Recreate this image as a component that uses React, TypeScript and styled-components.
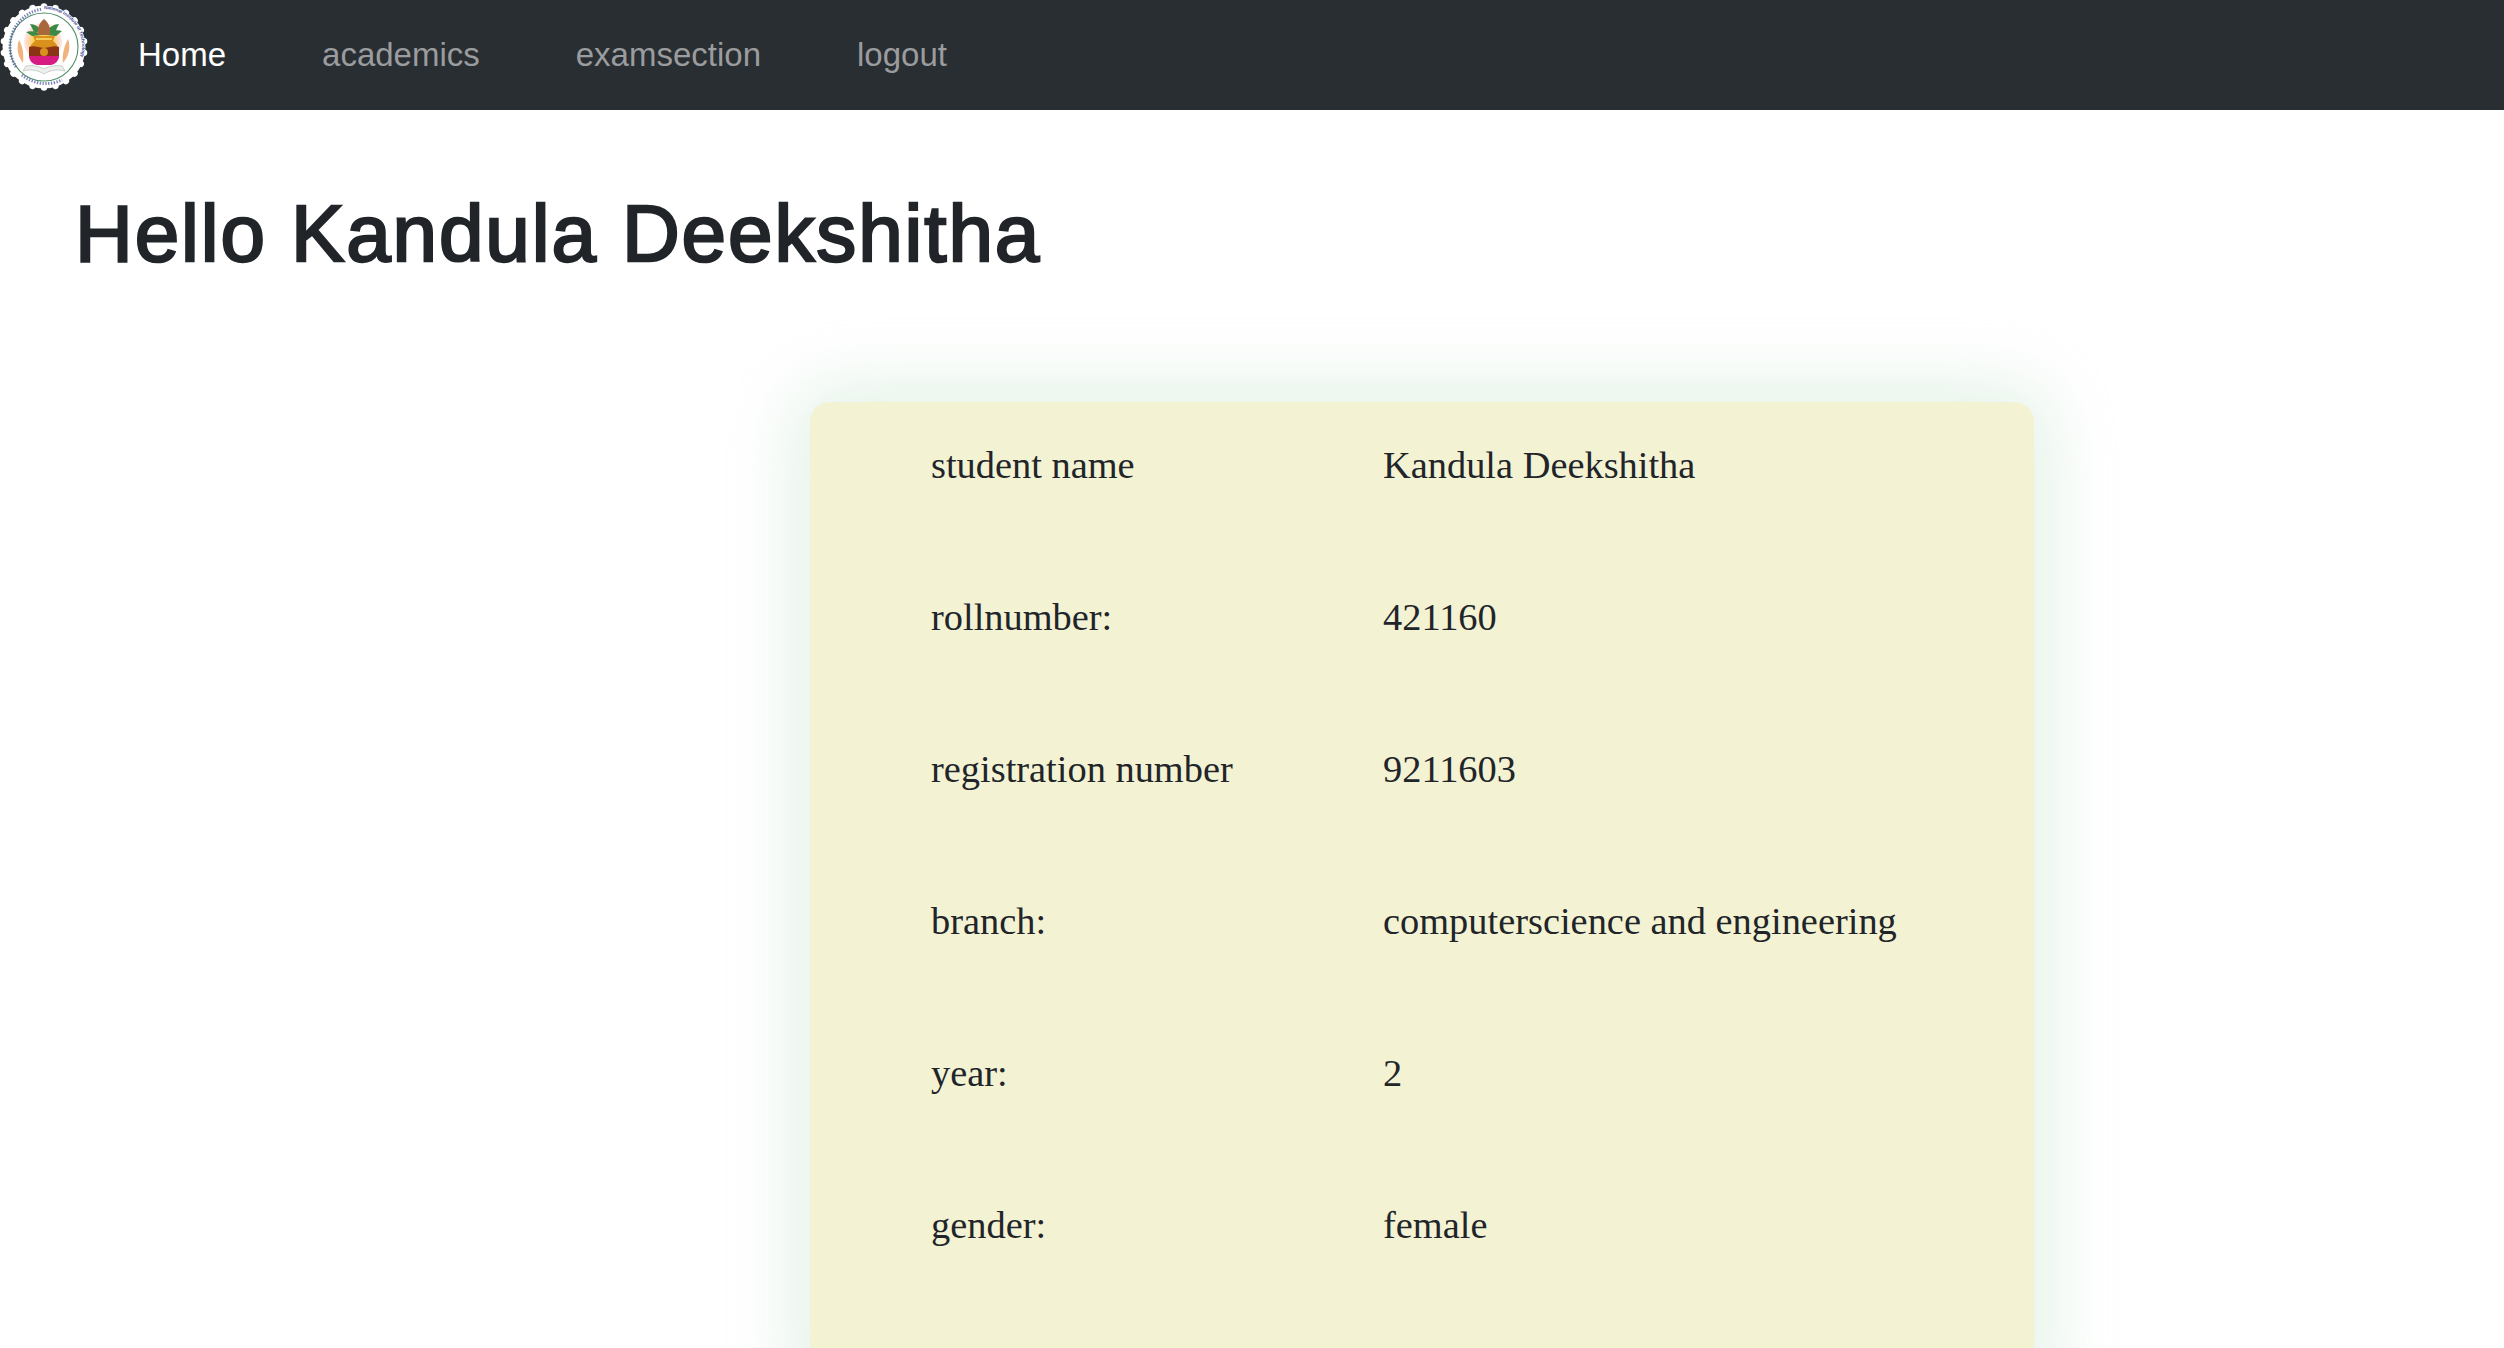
import React from "react";
import styled, { createGlobalStyle } from "styled-components";

const Global = createGlobalStyle`
  html, body { margin: 0; padding: 0; background: #fff; overflow: hidden; }
  body { height: 1348px; }
`;
const Page = styled.div`
  height: 1348px;
  overflow: hidden;
  display: flex;
  flex-direction: column;
`;
const NavBar = styled.nav`
  height: 110px;
  flex: none;
  background: #292e33;
  display: flex;
  align-items: center;
`;
const LogoMark = styled.svg`
  width: 92px;
  height: 96px;
  flex: none;
  align-self: flex-start;
  margin-right: 46px;
`;
const NavLinks = styled.div`
  display: flex;
  gap: 96px;
`;
const NavLink = styled.a<{ $active?: boolean }>`
  font-family: "Liberation Sans", Arial, sans-serif;
  font-size: 33px;
  line-height: 48px;
  color: ${(p) => (p.$active ? "#ffffff" : "#9a9c9e")};
`;
const Heading = styled.h1`
  margin: 76px 0 0 75px;
  font-family: "Liberation Sans", Arial, sans-serif;
  font-weight: 400;
  font-size: 80px;
  line-height: 96px;
  letter-spacing: 1.9px;
  color: #212529;
  -webkit-text-stroke: 2.4px #212529;
`;
const Card = styled.section`
  margin: 120px 0 0 810px;
  width: 1224px;
  flex: none;
  height: 1000px;
  box-sizing: border-box;
  padding: 36px 0 0 121px;
  background: #f3f2d3;
  border-radius: 20px;
  box-shadow: 0 0 70px 14px rgba(190, 225, 200, 0.45);
`;
const Row = styled.div`
  display: grid;
  grid-template-columns: 452px 1fr;
  height: 152px;
  font-family: "Liberation Serif", "Times New Roman", serif;
  font-size: 38.4px;
  line-height: 54px;
  color: #212529;
`;

const rows: [string, string][] = [
  ["student name", "Kandula Deekshitha"],
  ["rollnumber:", "421160"],
  ["registration number", "9211603"],
  ["branch:", "computerscience and engineering"],
  ["year:", "2"],
  ["gender:", "female"],
];

const teeth = Array.from({ length: 22 }, (_, i) => (i * 360) / 22);

function Logo() {
  return (
    <LogoMark viewBox="0 0 92 96">
      <defs>
        <path id="logoArc" d="M44 9a38 38 0 0 1 38 38 38 38 0 0 1-20 33" />
        <radialGradient id="logoGlow" cx="0.5" cy="0.5" r="0.5">
          <stop offset="0.55" stopColor="#ffd45c" />
          <stop offset="1" stopColor="#ffb0b0" stopOpacity="0.3" />
        </radialGradient>
      </defs>
      <g fill="#fff">
        <circle cx="44" cy="47" r="41.5" />
        {teeth.map((a) => (
          <circle key={a} cx="44" cy="6.5" r="3.2" transform={`rotate(${a} 44 47)`} />
        ))}
      </g>
      <circle cx="44" cy="47" r="34" fill="none" stroke="#4f8f68" strokeWidth="1.1" />
      <path d="M16 67a38 38 0 0 1 26-58" fill="none" stroke="#5560a5" strokeWidth="3" strokeDasharray="1.3 1.5" opacity="0.8" />
      <path d="M22 75a38 38 0 0 0 40 5" fill="none" stroke="#5560a5" strokeWidth="3" strokeDasharray="1.3 1.5" opacity="0.8" />
      <text fill="#3b4796" fontFamily="Liberation Sans, sans-serif" fontSize="4.6" fontWeight="700">
        <textPath href="#logoArc">National Institute of Technology</textPath>
      </text>
      <circle cx="43" cy="42" r="19" fill="url(#logoGlow)" />
      <path d="M19 40c-3 8-1 17 4 23 1-8 0-16-4-23zM68 39c3 8 1 17-5 24-1-8 1-17 5-24z" fill="#f0b27f" />
      <path d="M30 24c5 0 10 3 12 8l-8 0zM59 24c-5 0-10 3-12 8l8 0zM26 32c6-2 12 0 16 3l-10 1zM62 31c-6-2-12 0-16 4l10 1z" fill="#3a8a45" />
      <path d="M44 19c4 3 7 8 6 16H38c-1-8 2-13 6-16z" fill="#a8683c" />
      <path d="M33 36h22l-2 5c3 2 5 5 6 9H29c1-4 3-7 6-9z" fill="#d9901d" />
      <path d="M36 38h16v2H36z" fill="#f3c95a" />
      <path d="M29 47c4-2 9 0 15 1 6-1 11-3 15-1v9H29z" fill="#8a3415" />
      <circle cx="44" cy="52" r="4" fill="#d9901d" />
      <path d="M29 56h30c0 4-3 8-8 9H37c-5-1-8-5-8-9z" fill="#d81b83" />
      <path d="M23 71c7-2 15-1 21 3 6-4 14-5 21-3l-3-5c-6-1-13 0-18 3-5-3-12-4-18-3z" fill="#eef0ee" stroke="#aab4ac" strokeWidth="0.6" />
    </LogoMark>
  );
}

export default function App() {
  return (
    <Page>
      <Global />
      <NavBar>
        <Logo />
        <NavLinks>
          <NavLink $active>Home</NavLink>
          <NavLink>academics</NavLink>
          <NavLink>examsection</NavLink>
          <NavLink>logout</NavLink>
        </NavLinks>
      </NavBar>
      <Heading>Hello Kandula Deekshitha</Heading>
      <Card>
        {rows.map(([k, v]) => (
          <Row key={k}>
            <span>{k}</span>
            <span>{v}</span>
          </Row>
        ))}
      </Card>
    </Page>
  );
}
